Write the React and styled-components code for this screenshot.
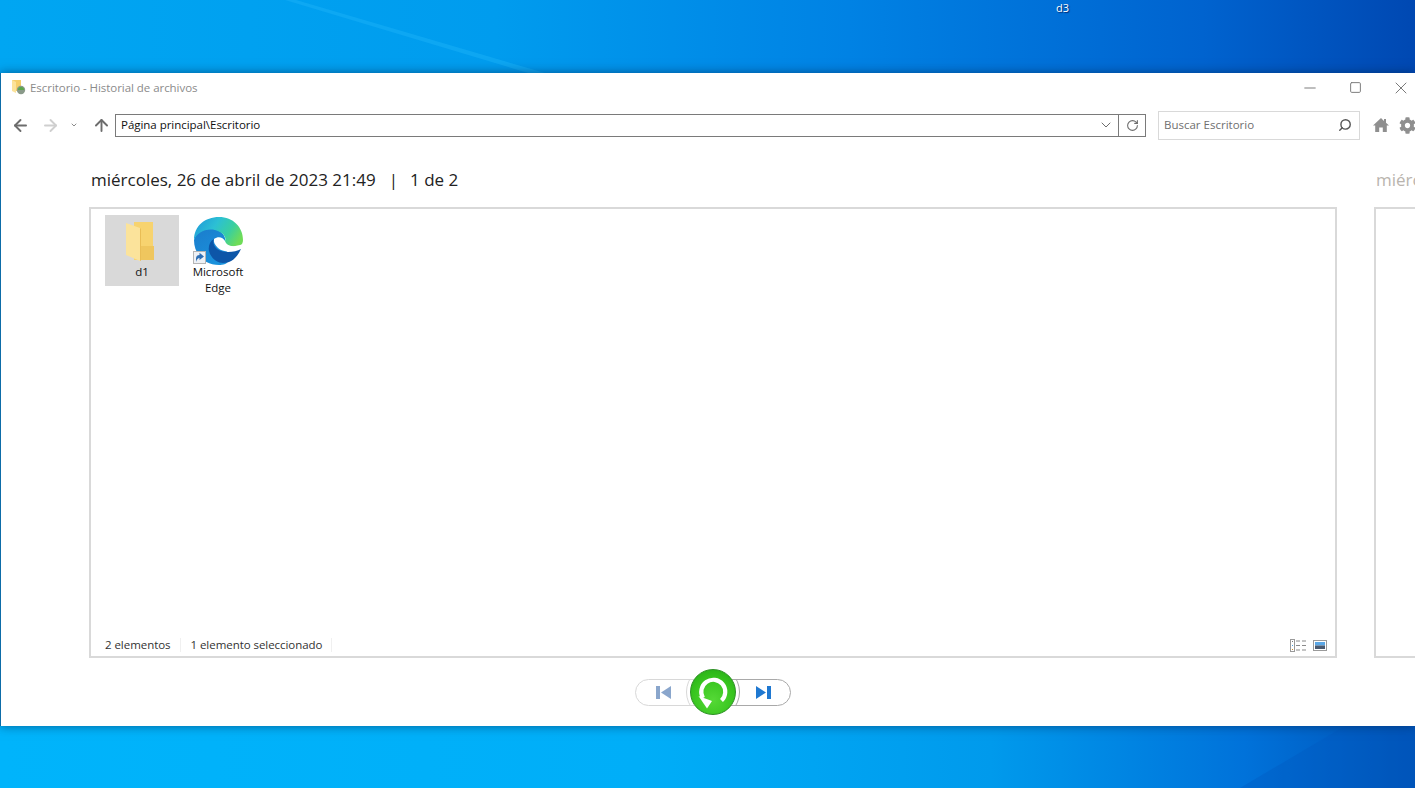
import React from "react";
import styled, { createGlobalStyle } from "styled-components";
import { ArrowLeft, ArrowRight, ArrowUp, ChevronDown, RotateCw, Search, Minus, Square, X } from "lucide-react";
import { FaCog } from "react-icons/fa";

const Global = createGlobalStyle`
  html, body { margin: 0; padding: 0; height: 100%; overflow: hidden; }
  body { font-family: "Open Sans", "Noto Sans", "Liberation Sans", sans-serif; font-size: 11.5px; color: #1e1e1e; }
`;

const Desktop = styled.div`
  position: relative; width: 1415px; height: 788px; overflow: hidden;
  padding: 73px 0 62px; box-sizing: border-box; display: flex;
`;
const Wallpaper = styled.svg`position: absolute; inset: 0; width: 1415px; height: 788px;`;
const DesktopLabel = styled.span`
  position: absolute; left: 1056px; top: 0; color: #fff; font-size: 11px; line-height: 15px;
  text-shadow: 1px 1px 1px #002a70;
`;
const Window = styled.div`
  position: relative; flex: 1; min-width: 0; background: #fff; border-left: 1px solid #0d6ca8;
  box-shadow: 0 0 10px rgba(0,30,70,.55); display: flex; flex-direction: column; overflow: hidden;
`;
const TitleBar = styled.div`display: flex; align-items: center; height: 29px; padding-left: 10px; color: #8b8b8b; flex: none;`;
const TitleText = styled.span`margin-left: 4px; font-size: 11.5px; letter-spacing: -.05px;`;
const Caption = styled.div`display: flex; margin-left: auto; margin-right: -9px; color: #7a7a7a;`;
const CaptionBtn = styled.span`width: 45.5px; height: 29px; display: flex; align-items: center; justify-content: center;`;
const Toolbar = styled.div`display: flex; align-items: center; height: 46px; padding: 0 0 0 10px; flex: none;`;
const NavBtn = styled.span`
  display: flex; align-items: center; justify-content: center; width: ${p => p.$w}px; margin-left: ${p => p.$ml || 0}px; flex: none;
  color: ${p => p.$off ? "#cfcfcf" : "#6d6d6d"};
`;
const Address = styled.div`
  width: 1031px; height: 23px; box-sizing: border-box; border: 1px solid #7a7a7a; display: flex; align-items: center; flex: none;
`;
const Path = styled.span`flex: 1; padding: 0 0 2px 5px; font-size: 11.5px; color: #111; letter-spacing: -.03px;`;
const AddrBtn = styled.span`
  width: ${p => p.$w}px; height: 100%; display: flex; align-items: center; justify-content: center; color: #6d6d6d;
  border-left: ${p => p.$line ? "1px solid #7a7a7a" : "none"};
`;
const SearchBox = styled.div`
  margin: 0 13px 0 12px; box-sizing: border-box; width: 202px; height: 29px; border: 1px solid #d9d9d9; display: flex; align-items: center;
  justify-content: space-between; padding: 0 7px 0 5px; flex: none;
`;
const SearchHint = styled.span`color: #6f6f6f; font-size: 11.5px; padding-bottom: 2px;`;
const ToolIcon = styled.span`display: flex; color: #8f8f8f; margin-right: ${p => p.$mr}px; flex: none;`;
const Timeline = styled.div`display: flex; gap: 37px; padding: 22px 0 0 88px; flex: none;`;
const Snapshot = styled.section`flex: 0 0 1248px; display: flex; flex-direction: column;`;
const Heading = styled.h2`
  margin: 0 0 17px 2px; height: 20px; line-height: 20px; font-size: 17px; font-weight: 400; white-space: nowrap;
  color: ${p => p.$dim ? "#b9b4ae" : "#222"};
`;
const Separator = styled.span`margin: 0 12px 0 13px; color: #222;`;
const Panel = styled.div`
  height: 451px; border: 2px solid #d9d9d9; box-sizing: border-box; display: flex; flex-direction: column;
`;
const Grid = styled.div`flex: 1; display: flex; padding: 6px 0 0 14px; gap: 2px; align-items: flex-start;`;
const Item = styled.div`
  width: 74px; height: 71px; display: flex; flex-direction: column; align-items: center; text-align: center;
  background: ${p => p.$sel ? "#d9d9d9" : "transparent"}; font-size: 11.5px; line-height: 16px; color: #111; flex: none;
`;
const IconSlot = styled.div`position: relative; height: 50px; width: 50px; margin: 1px 0 -2px; display: flex; align-items: center; justify-content: center; flex: none;`;
const ShortcutBadge = styled.svg`position: absolute; left: 0; bottom: 2px;`;
const FolderSvg = styled.svg`margin: 2px 5px 0 0;`;
const EdgeSvg = styled.svg`margin-left: 2px; flex: none;`;
const StatusBar = styled.div`height: 22px; display: flex; align-items: center; padding: 0 8px 0 14px; font-size: 11.5px; color: #333; letter-spacing: -.05px;`;
const StatusCell = styled.span`
  padding-right: 9px; margin-right: 10px; border-right: 1px solid #f0f0f0; line-height: 14px;
`;
const ViewIcons = styled.div`margin-left: auto; display: flex; gap: 6px; align-items: center;`;
const Controls = styled.div`display: flex; justify-content: center; align-items: center; width: 1248px; margin: 11px 0 0 88px; flex: none;`;
const Pill = styled.button`
  position: relative; width: 62px; height: 27px; padding: 0; box-sizing: border-box; background: #fff; overflow: hidden;
  border: 1px solid ${p => p.$side === "left" ? "#d8d8d8" : "#a9a9a9"};
  border-radius: ${p => p.$side === "left" ? "14px 0 0 14px" : "0 14px 14px 0"};
  margin: ${p => p.$side === "left" ? "0 -7px 0 0" : "0 0 0 -7px"};
  display: flex; align-items: center; justify-content: center;
  &::after {
    content: ""; position: absolute; top: -15px; width: 54px; height: 54px; border-radius: 50%; background: #fff;
    border: 1px solid ${p => p.$side === "left" ? "#d8d8d8" : "#a9a9a9"}; box-sizing: border-box;
    ${p => p.$side === "left" ? "right: -44px;" : "left: -44px;"}
  }
`;
const PillIcon = styled.svg`position: relative; ${p => p.$side === "left" ? "margin-right: 6px;" : "margin-left: 7px;"}`;
const Restore = styled.button`
  position: relative; z-index: 1; width: 46px; height: 46px; padding: 0; border-radius: 50%; border: 1px solid #2b8f22;
  background: radial-gradient(circle at 50% 68%, #55d936 0%, #38c51f 55%, #22a815 100%);
  display: flex; align-items: center; justify-content: center; flex: none; box-sizing: border-box;
`;

const FolderIcon = () => (
  <FolderSvg width="28" height="40" viewBox="0 0 28 40">
    <path d="M8 0h19v24h1v14H8z" fill="#f7d36f" />
    <path d="M14 24h14v14H14z" fill="#efc65e" />
    <path d="M0 1l14 5v33L0 33z" fill="#fbe39b" />
    <path d="M14 6v33l1-.5V7z" fill="#e9bd55" />
  </FolderSvg>
);

const EdgeIcon = () => (
  <EdgeSvg width="50" height="50" viewBox="0 0 50 50">
    <defs>
      <linearGradient id="eTop" x1="0" y1="0.2" x2="1" y2="0.6">
        <stop offset="0" stopColor="#1f9bd9" />
        <stop offset=".4" stopColor="#2cc0d4" />
        <stop offset=".72" stopColor="#39cfa0" />
        <stop offset="1" stopColor="#6fdc58" />
      </linearGradient>
      <linearGradient id="eLeft" x1="0" y1="0" x2="0.6" y2="1">
        <stop offset="0" stopColor="#1b7ccc" />
        <stop offset="1" stopColor="#1a92dc" />
      </linearGradient>
    </defs>
    <path d="M0 24C2 15 11 12 20 13c6 1 10 5 11 9v10c9 16-1 17-6 17C10 49 0 38 0 24z" fill="url(#eLeft)" />
    <path d="M0 24C0 10 11 1 25 1c14 0 24 10 24 23 0 2-1 5-3 6-6 1-13 0-17-2 2-2 3-5 2-7-2-4-6-6-10-7-10-2-18 3-21 10z" fill="url(#eTop)" />
    <path d="M20 23c4-3 9-2 11 2 2 5 7 7 18 3-1 5-5 7-9 7-7 1-13 0-16-3-3-3-5-6-4-9z" fill="#fff" />
    <path d="M20 23c-4 2-6 7-5 12 2 8 9 12 14 12 8 0 14-5 18-14-5 3-14 4-20 2-6-2-9-7-7-12z" fill="#0d56a8" />
  </EdgeSvg>
);

const Badge = () => (
  <ShortcutBadge width="13" height="13" viewBox="0 0 13 13">
    <rect x=".5" y=".5" width="12" height="12" fill="#eef1f5" stroke="#b5b5b5" />
    <path d="M3 11V7.5C3 5 4.5 4 6.5 4V1.8L11 5.5 6.5 9V7C5 7 4 8 3 11z" fill="#2f6fb5" />
  </ShortcutBadge>
);

const TitleGlyph = () => (
  <svg width="15" height="15" viewBox="0 0 15 15">
    <path d="M1 0h9v11H1z" fill="#f5cf6b" />
    <path d="M1 0l4 2v11l-4-2z" fill="#fbe29a" />
    <circle cx="10" cy="10" r="4.2" fill="#8a9a8a" />
    <path d="M7 10a3 3 0 0 1 6 0z" fill="#5aa84a" />
  </svg>
);

const HomeIcon = () => (
  <svg width="16" height="14" viewBox="0 0 16 14">
    <path d="M8 0L0 7.5h2.2V14h4V9.5h3.6V14h4V7.5H16L13 4.7V1h-2v1.9z" fill="currentColor" />
  </svg>
);

const DetailsIcon = () => (
  <svg width="17" height="13" viewBox="0 0 17 13">
    <rect x=".5" y=".5" width="4" height="12" fill="#fff" stroke="#9a9a9a" />
    <rect x="2" y="2" width="1" height="1" fill="#777" />
    <rect x="2" y="6" width="1" height="1" fill="#4aa3e0" />
    <rect x="2" y="10" width="1" height="1" fill="#d08a1a" />
    <path d="M6 2h4M12 2h4M6 6.5h4M12 6.5h4M6 11h4M12 11h4" stroke="#8a8a8a" />
  </svg>
);

const PreviewIcon = () => (
  <svg width="14" height="11" viewBox="0 0 14 11">
    <rect x=".5" y=".5" width="13" height="10" fill="#fff" stroke="#9a9a9a" />
    <rect x="2" y="2" width="10" height="3.5" fill="#5aa7e6" />
    <rect x="2" y="5.5" width="10" height="3.5" fill="#4a5a70" />
  </svg>
);

const RestoreIcon = () => (
  <svg width="44" height="44" viewBox="1 1 44 44">
    <path d="M31.5 31.5A12 12 0 1 0 13 29" fill="none" stroke="#fff" strokeWidth="4.2" />
    <path d="M8.5 27L22 32 17 39.5z" fill="#fff" />
  </svg>
);

const Snap = ({ children, dim, title }) => (
  <Snapshot>
    <Heading $dim={dim}>{title}</Heading>
    <Panel>{children}</Panel>
  </Snapshot>
);

export default function App() {
  return (
    <>
      <Global />
      <Desktop>
        <Wallpaper viewBox="0 0 1415 788">
          <defs>
            <linearGradient id="wt" x1="0" y1="0" x2="1" y2="0">
              <stop offset="0" stopColor="#00a6f2" />
              <stop offset=".35" stopColor="#009cee" />
              <stop offset=".6" stopColor="#0082e4" />
              <stop offset=".85" stopColor="#0063cf" />
              <stop offset="1" stopColor="#0048b2" />
            </linearGradient>
            <linearGradient id="wb" x1="0" y1="0" x2="1" y2="0">
              <stop offset="0" stopColor="#00b4fb" />
              <stop offset=".45" stopColor="#00aef8" />
              <stop offset=".7" stopColor="#009aec" />
              <stop offset=".88" stopColor="#0072da" />
              <stop offset="1" stopColor="#0052b6" />
            </linearGradient>
          </defs>
          <rect width="1415" height="394" fill="url(#wt)" />
          <rect y="394" width="1415" height="394" fill="url(#wb)" />
          <polygon points="285,0 296,0 545,73 528,73" fill="#18aef5" opacity=".55" />
          <polygon points="1345,726 1415,726 1415,788 1240,788" fill="#0058c0" opacity=".35" />
        </Wallpaper>
        <DesktopLabel>d3</DesktopLabel>
        <Window>
          <TitleBar>
            <TitleGlyph />
            <TitleText>Escritorio - Historial de archivos</TitleText>
            <Caption>
              <CaptionBtn><Minus size={18} strokeWidth={1.3} /></CaptionBtn>
              <CaptionBtn><Square size={13} strokeWidth={1.8} /></CaptionBtn>
              <CaptionBtn><X size={20} strokeWidth={1.2} /></CaptionBtn>
            </Caption>
          </TitleBar>
          <Toolbar>
            <NavBtn $w={19}><ArrowLeft size={19} strokeWidth={2.4} /></NavBtn>
            <NavBtn $w={40} $off><ArrowRight size={19} strokeWidth={2.4} /></NavBtn>
            <NavBtn $w={8}><ChevronDown size={12} strokeWidth={2.4} /></NavBtn>
            <NavBtn $w={28} $ml={9}><ArrowUp size={19} strokeWidth={2.4} /></NavBtn>
            <Address>
              <Path>Página principal\Escritorio</Path>
              <AddrBtn $w={25}><ChevronDown size={16} strokeWidth={1.5} /></AddrBtn>
              <AddrBtn $w={26} $line><RotateCw size={13} strokeWidth={2} /></AddrBtn>
            </Address>
            <SearchBox>
              <SearchHint>Buscar Escritorio</SearchHint>
              <Search size={14} strokeWidth={2.4} color="#555" style={{ transform: "scaleX(-1)" }} />
            </SearchBox>
            <ToolIcon $mr={10}><HomeIcon /></ToolIcon>
            <ToolIcon $mr={0}><FaCog size={17} /></ToolIcon>
          </Toolbar>
          <Timeline>
            <Snap title={<>miércoles, 26 de abril de 2023 21:49<Separator>|</Separator>1 de 2</>}>
              <Grid>
                <Item $sel>
                  <IconSlot><FolderIcon /></IconSlot>
                  d1
                </Item>
                <Item>
                  <IconSlot><EdgeIcon /><Badge /></IconSlot>
                  Microsoft Edge
                </Item>
              </Grid>
              <StatusBar>
                <StatusCell>2 elementos</StatusCell>
                <StatusCell>1 elemento seleccionado</StatusCell>
                <ViewIcons><DetailsIcon /><PreviewIcon /></ViewIcons>
              </StatusBar>
            </Snap>
            <Snap dim title="miércoles, 26 de abril de 2023 21:50" />
          </Timeline>
          <Controls>
            <Pill $side="left" aria-label="anterior">
              <PillIcon $side="left" width="15" height="13" viewBox="0 0 15 13">
                <rect x="0" y="0" width="4" height="13" fill="#8aa6cc" />
                <path d="M15 0v13L5 6.5z" fill="#8aa6cc" />
              </PillIcon>
            </Pill>
            <Restore aria-label="restaurar"><RestoreIcon /></Restore>
            <Pill $side="right" aria-label="siguiente">
              <PillIcon $side="right" width="15" height="13" viewBox="0 0 15 13">
                <path d="M0 0v13l10-6.5z" fill="#1f78d1" />
                <rect x="11" y="0" width="4" height="13" fill="#1f78d1" />
              </PillIcon>
            </Pill>
          </Controls>
        </Window>
      </Desktop>
    </>
  );
}
